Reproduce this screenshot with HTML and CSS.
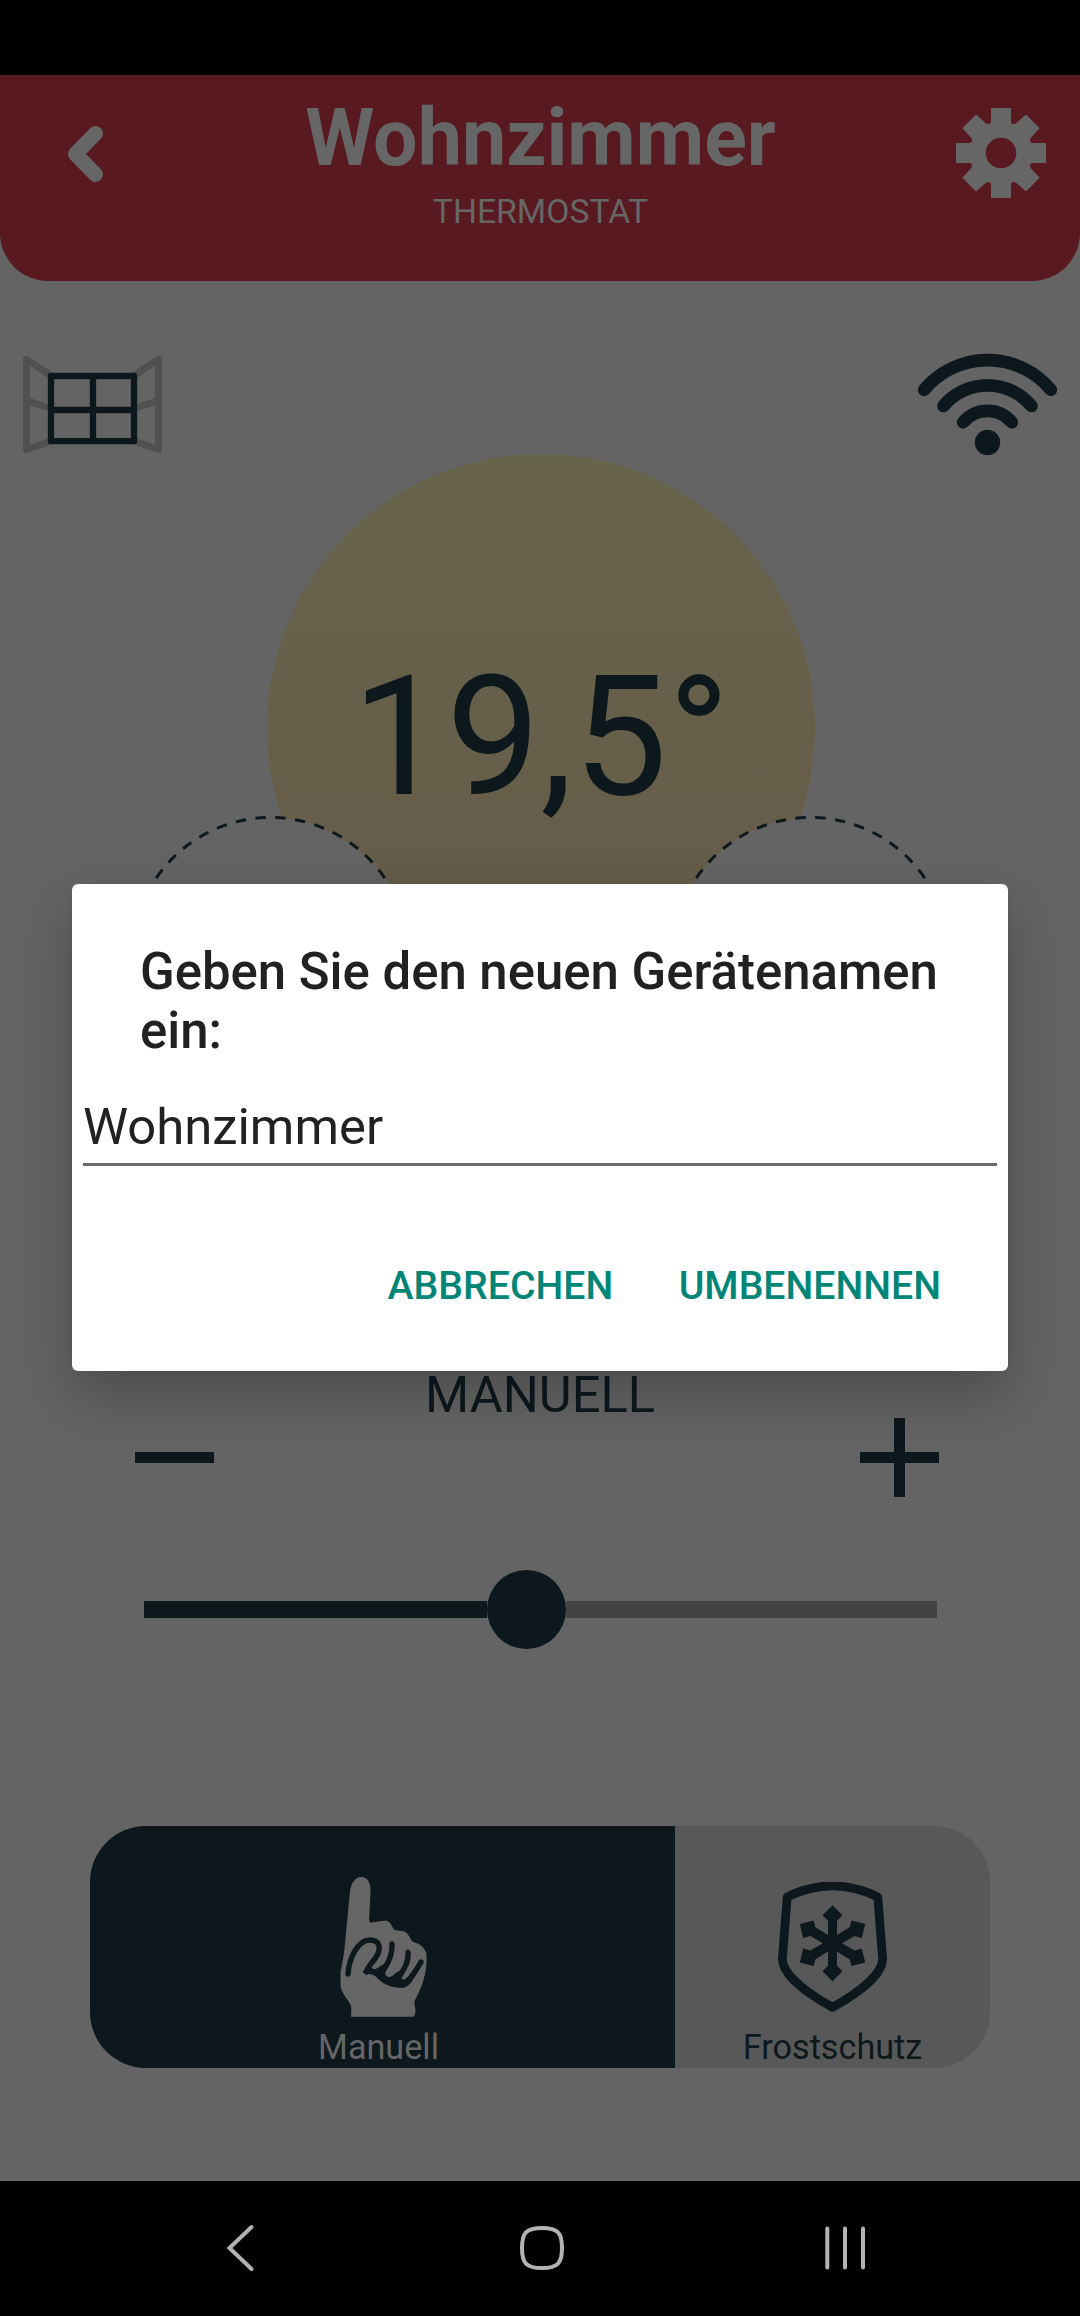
FILE: index.html
```html
<!DOCTYPE html>
<html lang="de">
<head>
<meta charset="utf-8">
<title>Wohnzimmer – Thermostat</title>
<link rel="stylesheet" href="styles.css">
</head>
<body>
<div class="screen">
  <div class="status-bar"></div>
  <header class="header">
    <svg class="back" viewBox="0 0 40 60" aria-hidden="true"><path d="M29.500 9.500 9.500 30 29.500 50.500"/></svg>
    <div class="heading">
      <h1 class="title">Wohnzimmer</h1>
      <p class="subtitle">THERMOSTAT</p>
    </div>
    <svg class="gear" viewBox="-45 -45 90 90" aria-hidden="true">
      <defs><path id="tooth" d="M0 0V-45H10V-32Q10-29 12.500-29Q14.500-29 16-30.500L25-38.500 38.700-24.700 31-16.500Q29-14.500 29-12.500Q29-10 32-10H45V0Z"/></defs>
      <mask id="hub"><rect x="-45" y="-45" width="90" height="90" fill="#fff"/><circle r="15.300" fill="#000"/></mask>
      <g mask="url(#hub)">
        <use href="#tooth"/><use href="#tooth" transform="scale(-1 1)"/><use href="#tooth" transform="scale(1 -1)"/><use href="#tooth" transform="scale(-1 -1)"/>
        <circle r="24"/>
      </g>
    </svg>
  </header>

  <main class="main">
    <div class="indicators">
      <svg class="window" viewBox="23 353 140 101" aria-hidden="true">
        <g class="sash"><path d="M51 375.500 26.500 359.300V449.500L51 441M26.500 400.500 51 408.500"/><path d="M134 375.500 158.500 359.300V449.500L134 441M158.500 400.500 134 408.500"/></g>
        <path class="frame" d="M51 376H134V441.200H51ZM93 376V441.200M51 410H134"/>
      </svg>
      <svg class="wifi" viewBox="917 353 141 103" aria-hidden="true">
        <path d="M924.200 389.800A82.200 82.200 0 0 1 1050.800 389.800M943.500 406A57.100 57.100 0 0 1 1031.500 406M963.200 422.300A31.500 31.500 0 0 1 1011.800 422.300"/>
        <circle cx="987.500" cy="442.400" r="12.700"/>
      </svg>
    </div>

    <section class="dial">
      <svg class="dial-art" viewBox="0 454 1080 917" aria-hidden="true">
        <defs><linearGradient id="warm" x1="0" y1="0" x2="0" y2="1"><stop offset="0" stop-color="#66644b"/><stop offset="1" stop-color="#665b49"/></linearGradient></defs>
        <circle cx="541" cy="728" r="274" fill="url(#warm)"/>
        <circle cx="270.500" cy="955" r="137.500" fill="#646464"/>
        <circle cx="810.500" cy="955" r="137.500" fill="#646464"/>
        <g class="dashes">
          <path d="M270.500 817.500A138 138 0 0 1 270.500 1093.500"/><path d="M270.500 817.500A138 138 0 0 0 270.500 1093.500"/>
          <path d="M810.500 817.500A138 138 0 0 1 810.500 1093.500"/><path d="M810.500 817.500A138 138 0 0 0 810.500 1093.500"/>
        </g>
      </svg>
      <div class="temperature">19,5°</div>
    </section>

    <div class="mode-name">MANUELL</div>
    <div class="steppers">
      <svg class="step" viewBox="0 0 79 79" aria-hidden="true"><path d="M0 34h79v11H0z"/></svg>
      <svg class="step" viewBox="0 0 79 79" aria-hidden="true"><path d="M0 34h79v11H0zM34 0h11v79H34z"/></svg>
    </div>
    <div class="slider"><span class="done"></span><span class="thumb"></span><span class="rest"></span></div>

    <div class="modes">
      <div class="mode mode-active">
        <svg class="hand" viewBox="-2.500 10 130 150" aria-hidden="true">
          <path class="skin" d="M30.500 156.800C31 150 31.500 146.500 28.500 142C24 136 21 131 20 126V112C22 104 24 92 25.300 75L29.300 33C30 23 35 17 41 17S50 23 50 31L48.700 59Q48.700 63 51 62.600L65 60.600Q68 60.600 70 63.500L73 69Q74 70.300 77 70.500L83 71.200C88 72 90 80 92 81.500Q94 82.500 97 83.500C101 85 106 90.500 106 94.500V103C105 118 100 130 95 139C92.500 143 95.500 148 95 152Q94.500 155 93 156.800Z"/>
          <path class="crease" d="M27.500 114C28.500 99 37 79.500 50 80C58 80.500 60 86 58 92C56 100 47 105 46 112"/>
          <path class="crease" d="M71.500 84C72.500 94 68 103 62 112M87.500 92.500C88.500 102 83 110 78 118M100.500 102C96 109 92 118 84.500 123"/>
          <path class="palm" d="M42 112L50 104L51.300 108Q54 111 60 106L69 101Q62 113 66 116Q70 119 75 113L84.500 108L80 117Q80 120.500 85 119Q90 117 95 109L99 107.500C94 118 90 127 82 128C66 127.500 61 122 54.500 116C50 113 45 114 42 112Z"/>
        </svg>
        <span class="mode-label mode-label-manual">Manuell</span>
      </div>
      <div class="mode mode-frost">
        <svg class="shield" viewBox="0 0 110 131" aria-hidden="true">
          <path class="outline" d="M9.200 14.900Q54.500-7.200 99.800 14.900L104.600 76.500C105 91 84 109 54.500 125.300C25 109 4 91 4.400 76.500Z"/>
          <g transform="translate(54.500 61.300)">
            <path d="M-4.500 0V-22.500L-10-28 0-38 10-28 4.500-22.500V22.500L10 28 0 38-10 28-4.500 22.500Z"/>
            <path d="M-9.700 0-22-7.300-29.300-5.300-32.700-19.300-19-22.700-17-16-4.500-8.300H4.500L17-16 19-22.700 32.700-19.300 29.300-5.300 22-7.300 9.700 0 22 7.300 29.300 5.300 32.700 19.300 19 22.700 17 16 4.500 8.300H-4.500L-17 16-19 22.700-32.700 19.300-29.300 5.300-22 7.300Z"/>
          </g>
        </svg>
        <span class="mode-label">Frostschutz</span>
      </div>
    </div>
  </main>

  <nav class="nav-bar">
    <svg class="nav-icon" viewBox="0 0 48 48" aria-hidden="true"><path d="M34.500 3 12.500 24 34.500 45"/></svg>
    <svg class="nav-icon" viewBox="0 0 48 48" aria-hidden="true"><path d="M23 4C38.500 4 43 8.500 43 24S38.500 44 23 44 3 39.500 3 24 7.500 4 23 4Z"/></svg>
    <svg class="nav-icon" viewBox="0 0 48 48" aria-hidden="true"><path d="M7.300 4.500V43.500M25 4.500V43.500M43 4.500V43.500"/></svg>
  </nav>

  <div class="dialog" role="dialog">
    <h2 class="dialog-title">Geben Sie den neuen Gerätenamen ein:</h2>
    <div class="field">Wohnzimmer</div>
    <div class="actions"><span class="action">ABBRECHEN</span><span class="action">UMBENENNEN</span></div>
  </div>
</div>
</body>
</html>
```
FILE: styles.css
```css
* { box-sizing: border-box; }

body {
  margin: 0;
  background: #000;
  font-family: Roboto, "Liberation Sans", sans-serif;
}

h1, h2, p { margin: 0; }
svg { display: block; flex: none; }

.screen {
  position: relative;
  display: flex;
  flex-direction: column;
  width: 1080px;
  height: 2316px;
  overflow: hidden;
  background: #646464;
  color: #0d181d;
}

.status-bar { height: 75px; background: #000; }

.header {
  display: flex;
  justify-content: space-between;
  height: 206px;
  padding: 17px 34px 0 66px;
  border-radius: 0 0 48px 48px;
  background: #591920;
  color: #666;
}

.back { width: 40px; height: 60px; margin-top: 32px; fill: none; stroke: #666; stroke-width: 15; stroke-linecap: round; stroke-linejoin: round; }
.heading { display: flex; flex-direction: column; align-items: center; gap: 7.5px; margin-left: 19px; }
.title { font-size: 79px; line-height: 92px; font-weight: 700; }
.subtitle { font-size: 33.7px; line-height: 40px; }
.gear { width: 90px; height: 90px; margin-top: 16px; fill: #666; }

.main { display: flex; flex-direction: column; height: 1900px; padding-top: 72px; }

.indicators { display: flex; justify-content: space-between; height: 101px; padding: 0 22px 0 23px; }
.window { width: 140px; height: 101px; fill: none; stroke-width: 6.3; stroke-linejoin: round; }
.sash { stroke: #505050; stroke-width: 7; }
.frame { stroke: #0d181d; }
.wifi { width: 141px; height: 103px; fill: #0d181d; }
.wifi path { fill: none; stroke: #0d181d; stroke-width: 12.7; stroke-linecap: round; }

.dial { display: grid; height: 917.7px; }
.dial-art, .temperature { grid-area: 1 / 1; }
.dial-art { width: 1080px; height: 917px; }
.dashes { fill: none; stroke: #0d181d; stroke-width: 3; stroke-dasharray: 10.4 9.5; stroke-dashoffset: -4.7; }
.temperature { padding: 184.6px 0 0 2px; font-size: 167.5px; line-height: 196px; text-align: center; }

.mode-name { font-size: 50.6px; line-height: 46px; text-align: center; }

.steppers { display: flex; justify-content: space-between; padding: 0 141px 0 135px; }
.step { width: 79px; height: 79px; fill: #0d181d; }

.slider { display: flex; align-items: center; margin: 73px 143.5px 0; height: 79px; }
.done { width: 343.5px; height: 17px; background: #0d181d; }
.thumb { width: 79px; height: 79px; border-radius: 50%; background: #0d181d; }
.rest { flex: 1; height: 17px; background: #434343; }

.modes { display: flex; width: 900px; height: 242px; margin: 177px 90px 0; border-radius: 56px; overflow: hidden; }
.mode { display: flex; flex-direction: column; align-items: center; justify-content: flex-end; padding-bottom: .5px; }
.mode-active { width: 585px; background: #0d181d; color: #666; }
.mode-frost { width: 315px; background: #585858; }
.hand { width: 130px; height: 150px; margin-bottom: 7.5px; }
.skin { fill: #666; }
.crease { fill: none; stroke: #0d181d; stroke-width: 5.4; stroke-linecap: round; }
.palm { fill: #0d181d; }
.shield { width: 110px; height: 131px; margin-bottom: 14px; fill: #0d181d; }
.outline { fill: none; stroke: #0d181d; stroke-width: 8.8; stroke-linejoin: round; }
.mode-label { font-size: 34.2px; line-height: 40px; }
.mode-label-manual { margin-right: 8px; }

.nav-bar { display: flex; justify-content: space-between; height: 135px; padding: 43px 212px 0 217px; background: #000; }
.nav-icon { width: 48px; height: 48px; fill: none; stroke: #b3b3b3; stroke-width: 4; stroke-linecap: round; stroke-linejoin: miter; }

.dialog {
  position: absolute;
  left: 72px;
  top: 884px;
  width: 936px;
  height: 487px;
  padding-top: 57.8px;
  border-radius: 6px;
  background: #fff;
  color: #212121;
  box-shadow: 0 24px 56px rgba(0, 0, 0, .24), 0 0 10px rgba(0, 0, 0, .03);
}
.dialog-title { padding: 0 50px 0 68px; font-size: 50.9px; line-height: 59.3px; font-weight: 500; }
.field { margin: 36.3px 11px 0; padding-bottom: 6.3px; border-bottom: 3px solid #6a6a6a; font-size: 50.8px; line-height: 60px; }
.actions { display: flex; justify-content: flex-end; gap: 65.5px; margin-top: 97px; padding-right: 67px; font-size: 39.2px; line-height: 46px; font-weight: 500; color: #008577; }
```
